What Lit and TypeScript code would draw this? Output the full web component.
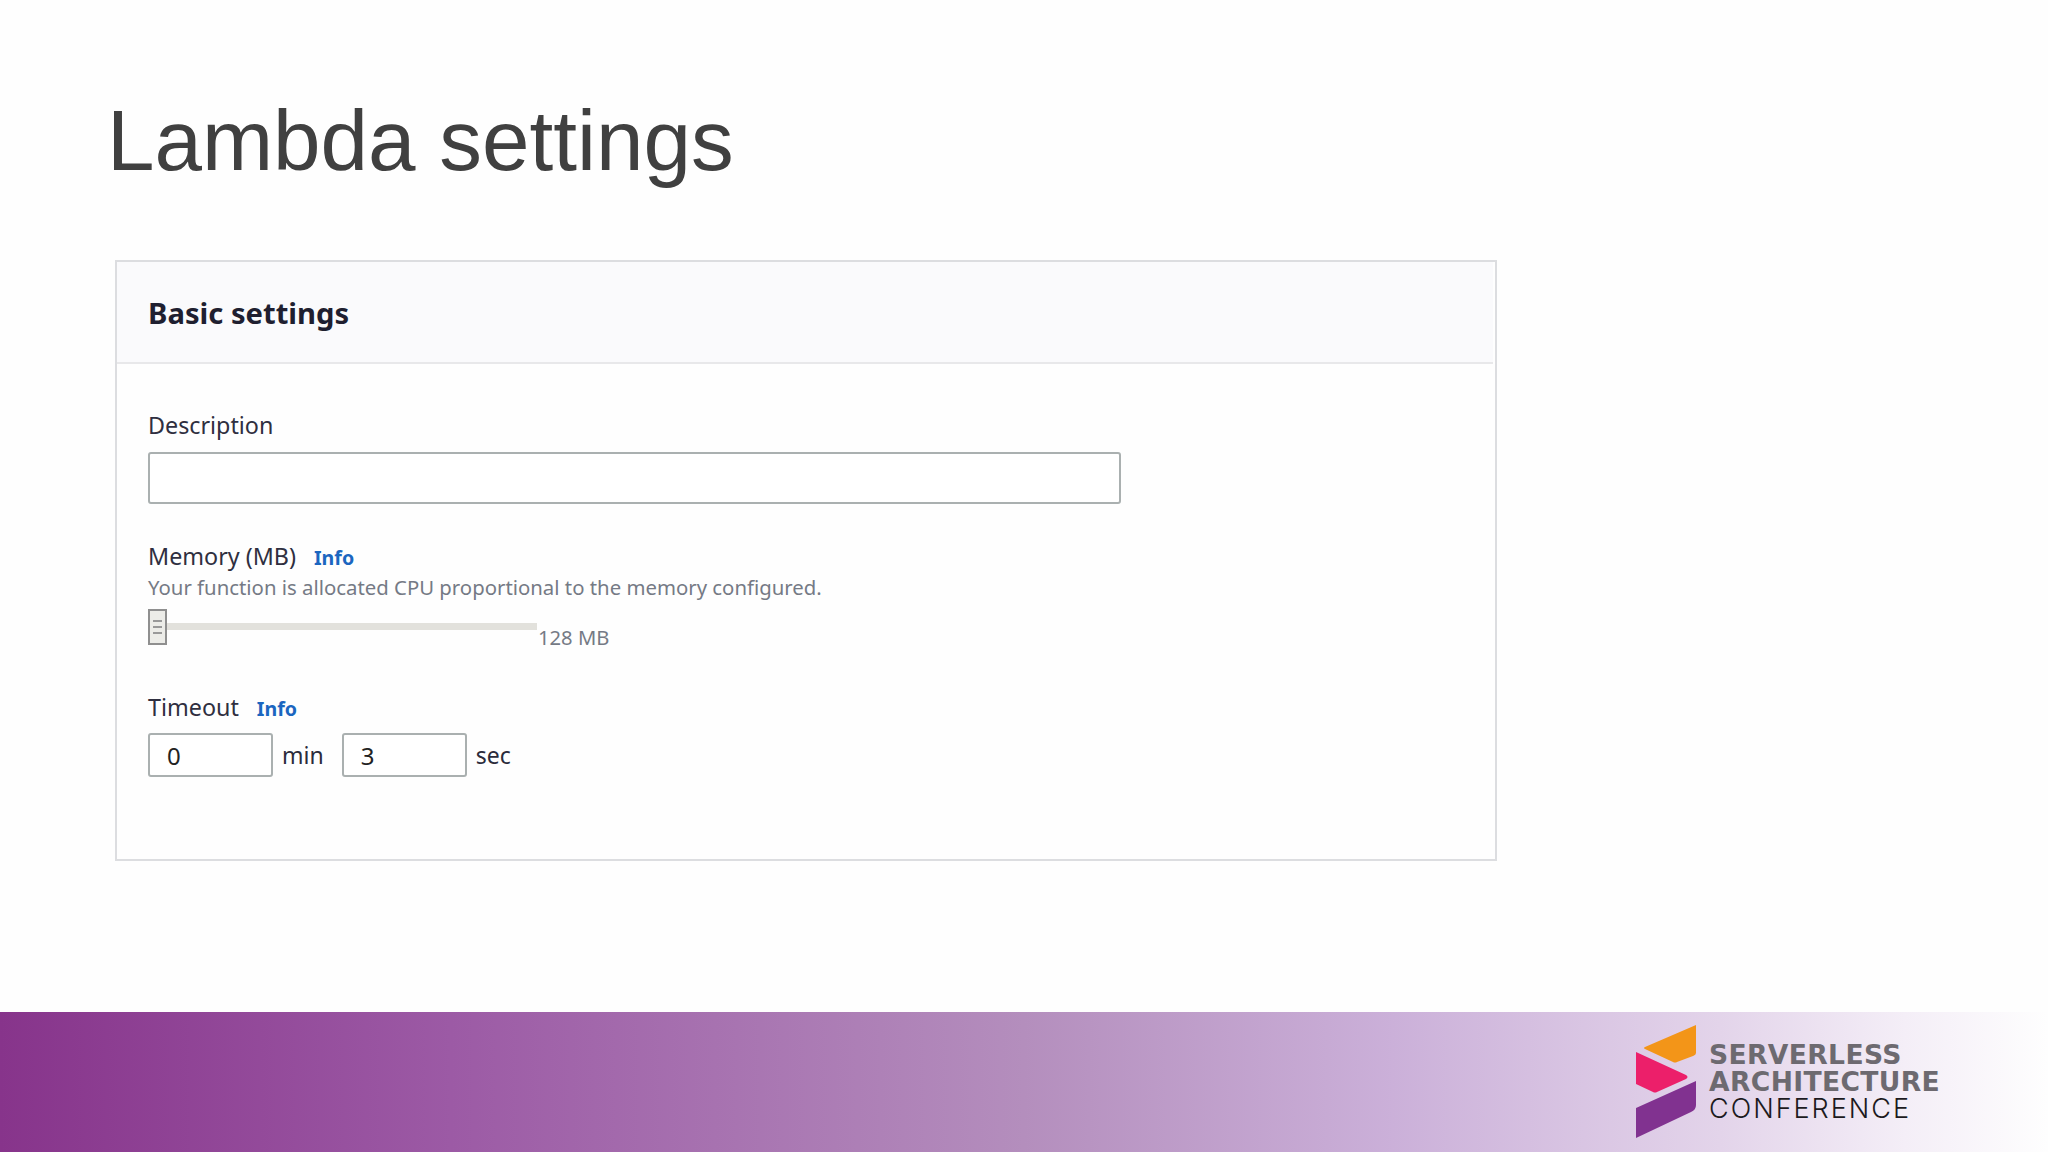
import { LitElement, html, css } from "lit";
import { customElement } from "lit/decorators.js";

@customElement("app-root")
export class AppRoot extends LitElement {
  static styles = css`
    :host { display: block; width: 2048px; height: 1152px; background: #fefefe; overflow: hidden; }
    .page { height: 1152px; display: flex; flex-direction: column; }
    h1 { margin: 0; padding: 91px 0 0 107px; height: 260px; flex: none; box-sizing: border-box; font: 400 85.4px/100px "Liberation Sans", Arial, sans-serif; color: #404040; }
    .card { margin-left: 115px; width: 1382px; height: 601px; flex: none; box-sizing: border-box; border: 2px solid #dcdde0; background: #fefefe; font-family: "Noto Sans", sans-serif; }
    .head { height: 102px; margin-right: 2px; box-sizing: border-box; background: #fafafc; border-bottom: 2px solid #e8e8ea; padding: 29px 0 0 31px; font: 700 29.2px/44px "Noto Sans", sans-serif; color: #1f1f30; }
    .body { padding: 0 0 0 31px; }
    .label { color: #2f2f40; font-size: 23.3px; line-height: 32px; display: flex; gap: 18px; align-items: baseline; }
    .info { color: #1b66c0; font-size: 19.6px; font-weight: 700; }
    .l1 { margin-top: 45px; }
    input { display: block; box-sizing: border-box; border: 2px solid #aab0b0; border-radius: 3px; background: #fff; margin: 0; outline: none; font: 400 24px "Noto Sans", sans-serif; color: #222; }
    .desc { width: 973px; height: 52px; margin-top: 11px; }
    .l2 { margin-top: 36px; }
    .hint { color: #757a85; font-size: 20.35px; line-height: 30px; margin-top: -2px; }
    .slider { display: flex; margin-top: 7px; height: 36px; }
    .thumb { width: 19px; height: 36px; box-sizing: border-box; border: 2px solid #8f8f8f; background: #ecece8; display: flex; flex-direction: column; align-items: center; justify-content: center; gap: 4px; }
    .thumb i { display: block; width: 9px; height: 2px; background: #999; }
    .track { width: 370px; height: 7px; margin-top: 14px; background: #e2e1dc; }
    .val { margin: 13px 0 0 1px; color: #757a85; font-size: 20.2px; line-height: 30px; white-space: nowrap; }
    .l3 { margin-top: 46px; }
    .time { display: flex; align-items: center; margin-top: 8px; color: #2b2b3b; font-size: 23px; }
    .time input { width: 125px; height: 44px; padding-left: 17px; }
    .time span { margin: 0 18px 0 9px; }
    footer { margin-top: auto; height: 140px; display: flex; justify-content: flex-end; align-items: center; padding: 0 98px 2px 0; gap: 13px; box-sizing: border-box;
      background: linear-gradient(90deg, #87348b 0%, #9c5aa5 22%, #b48ebd 50%, #cbb0d9 68%, #e3d4ea 84%, #f4eef7 93%, #fefefe 100%); }
    svg { display: block; width: 60px; height: 113px; flex: none; }
    .logo { width: 241px; font-size: 27px; line-height: 27px; white-space: nowrap; }
    .logo div { height: 27px; }
    .strong { font-family: "DejaVu Sans", sans-serif; font-size: 26.6px; font-weight: 700; color: #6d6a70; letter-spacing: 0.35px; }
    .light { font-family: Inter, sans-serif; font-weight: 300; color: #1c1a20; letter-spacing: 2px; }
  `;
  render() {
    return html`<div class="page">
      <h1>Lambda settings</h1>
      <section class="card">
        <div class="head">Basic settings</div>
        <div class="body">
          <div class="label l1">Description</div>
          <input class="desc" />
          <div class="label l2">Memory (MB) <span class="info">Info</span></div>
          <div class="hint">Your function is allocated CPU proportional to the memory configured.</div>
          <div class="slider">
            <div class="thumb"><i></i><i></i><i></i></div>
            <div class="track"></div>
            <div class="val">128 MB</div>
          </div>
          <div class="label l3">Timeout <span class="info">Info</span></div>
          <div class="time"><input value="0" /><span>min</span><input value="3" /><span>sec</span></div>
        </div>
      </section>
      <footer>
        <svg viewBox="0 0 60 113">
          <path fill="#f39518" d="M60 0V28Q60 30 57 31L41 37Q39 38 37 37L9 24Q7 23 9 22Z"/>
          <path fill="#ec1f6a" d="M0 27L50 50Q53 52 50 54L21 67Q19 68 17 67L0 59Z"/>
          <path fill="#813290" d="M60 56V80Q60 85 55 87L0 113V83Z"/>
        </svg>
        <div class="logo"><div class="strong">SERVERLESS</div><div class="strong">ARCHITECTURE</div><div class="light">CONFERENCE</div></div>
      </footer>
    </div>`;
  }
}
